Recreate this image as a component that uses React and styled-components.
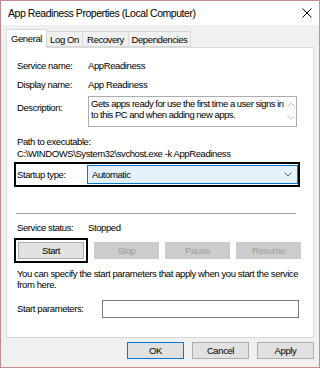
import React from 'react';
import styled, { createGlobalStyle } from 'styled-components';

const GlobalStyle = createGlobalStyle`
  html, body { margin: 0; padding: 0; background: #ffffff; }
  body { font-family: "Liberation Sans", Arial, sans-serif; }
`;

const Window = styled.div`
  width: 320px;
  height: 368px;
  box-sizing: border-box;
  border: 1px solid #c98b8c;
  background: #f0f0f0;
  display: flex;
  flex-direction: column;
  color: #000;
  font-size: 9.5px;
  letter-spacing: -0.4px;
`;

const TitleBar = styled.div`
  height: 24px;
  background: #ffffff;
  display: flex;
  align-items: center;
  justify-content: space-between;
  padding: 0 7px 0 7px;
`;

const Title = styled.span`
  font-size: 10.5px;
  letter-spacing: -0.45px;
  color: #000;
`;

const Body = styled.div`
  padding: 4px 5px 0 5px;
  display: flex;
  flex-direction: column;
`;

const TabRow = styled.div`
  display: flex;
  align-items: flex-end;
  height: 18px;
`;

const Tab = styled.div`
  box-sizing: border-box;
  width: ${p => p.$w}px;
  height: ${p => (p.$active ? '19px' : '16px')};
  display: flex;
  align-items: center;
  justify-content: center;
  border: 1px solid #d9d9d9;
  border-bottom: ${p => (p.$active ? 'none' : '1px solid #d9d9d9')};
  border-left: ${p => (p.$first || p.$active ? '1px solid #d9d9d9' : 'none')};
  background: ${p => (p.$active ? '#ffffff' : '#f0f0f0')};
  margin-bottom: ${p => (p.$active ? '-1px' : '0')};
  position: relative;
  z-index: ${p => (p.$active ? 1 : 0)};
  padding-bottom: ${p => (p.$active ? '2px' : '0')};
`;

const Panel = styled.div`
  box-sizing: border-box;
  height: 291px;
  background: #ffffff;
  border: 1px solid #d9d9d9;
  padding: 11px 10px 0 10px;
  display: flex;
  flex-direction: column;
`;

const Row = styled.div`
  display: flex;
  align-items: ${p => (p.$top ? 'flex-start' : 'center')};
  margin-top: ${p => p.$mt || 0}px;
  line-height: ${p => p.$lh || 14}px;
`;

const Label = styled.div`
  width: ${p => p.$w || 71}px;
  flex: none;
  padding-top: ${p => p.$pt || 0}px;
`;

const Line = styled.div`
  margin-top: ${p => p.$mt || 0}px;
  line-height: ${p => p.$lh || 12}px;
  white-space: nowrap;
`;

const DescBox = styled.div`
  box-sizing: border-box;
  width: 209px;
  height: 31px;
  border: 1px solid #abadb3;
  display: flex;
  padding: 1px 0 0 2px;
  line-height: 11px;
`;

const DescText = styled.div`
  flex: 1;
  letter-spacing: -0.5px;
`;

const ScrollCol = styled.div`
  width: 10px;
  display: flex;
  flex-direction: column;
  align-items: center;
  justify-content: space-between;
  padding: 4px 0 6px 0;
`;

const Outline = styled.div`
  box-sizing: border-box;
  border: 2px solid #000;
  margin-left: -3px;
`;

const StartupOutline = styled(Outline)`
  width: 286px;
  margin-top: 2px;
  padding: 1px 0 1px 1px;
  display: flex;
  align-items: center;
`;

const Combo = styled.div`
  box-sizing: border-box;
  flex: 1;
  height: 19px;
  background: #e5f1fb;
  border: 1px solid #0078d7;
  display: flex;
  align-items: center;
  justify-content: space-between;
  padding: 0 5px 0 4px;
`;

const Separator = styled.div`
  width: 280px;
  height: 1px;
  background: #a0a0a0;
  margin: 26px 0 0 -1px;
`;

const ButtonRow = styled.div`
  display: flex;
  align-items: center;
  margin-top: 3px;
  gap: 6px;
`;

const StartOutline = styled(Outline)`
  padding: 2px;
  width: 74px;
`;

const Button = styled.div`
  box-sizing: border-box;
  width: ${p => p.$w || 65}px;
  height: 17px;
  display: flex;
  align-items: center;
  justify-content: center;
  background: ${p => (p.$disabled ? '#cccccc' : '#e1e1e1')};
  border: 1px solid ${p => (p.$primary ? '#0078d7' : p.$disabled ? '#cccccc' : '#adadad')};
  color: ${p => (p.$disabled ? '#9d9d9d' : '#000')};
`;

const Input = styled.div`
  box-sizing: border-box;
  width: 197px;
  height: 18px;
  border: 1px solid #7a7a7a;
  background: #fff;
`;

const Footer = styled.div`
  display: flex;
  justify-content: flex-end;
  gap: 8px;
  margin-top: 4px;
`;

const Chevron = ({ up, color = '#606060' }) => (
  <svg width="8" height="5" viewBox="0 0 8 5">
    <path
      d={up ? 'M0.5 4.5 L4 1 L7.5 4.5' : 'M0.5 0.5 L4 4 L7.5 0.5'}
      fill="none"
      stroke={color}
      strokeWidth="1"
    />
  </svg>
);

const CloseIcon = () => (
  <svg width="10" height="10" viewBox="0 0 10 10">
    <path d="M0.5 0.5 L9.5 9.5 M9.5 0.5 L0.5 9.5" stroke="#000" strokeWidth="1" />
  </svg>
);

const App = () => (
  <>
    <GlobalStyle />
    <Window>
      <TitleBar>
        <Title>App Readiness Properties (Local Computer)</Title>
        <CloseIcon />
      </TitleBar>
      <Body>
        <TabRow>
          <Tab $active $first $w={41}>General</Tab>
          <Tab $w={36}>Log On</Tab>
          <Tab $w={46}>Recovery</Tab>
          <Tab $w={62}>Dependencies</Tab>
        </TabRow>
        <Panel>
          <Row>
            <Label>Service name:</Label>
            <span>AppReadiness</span>
          </Row>
          <Row $mt={5}>
            <Label>Display name:</Label>
            <span>App Readiness</span>
          </Row>
          <Row $mt={4} $top>
            <Label $pt={5}>Description:</Label>
            <DescBox>
              <DescText>
                Gets apps ready for use the first time a user signs in to this PC and when adding new apps.
              </DescText>
              <ScrollCol>
                <Chevron up color="#c4c4c4" />
                <Chevron color="#c4c4c4" />
              </ScrollCol>
            </DescBox>
          </Row>
          <Line $mt={9}>Path to executable:</Line>
          <Line>C:\WINDOWS\System32\svchost.exe -k AppReadiness</Line>
          <StartupOutline>
            <Label $w={70}>Startup type:</Label>
            <Combo>
              <span>Automatic</span>
              <Chevron />
            </Combo>
          </StartupOutline>
          <Separator />
          <Row $mt={7}>
            <Label>Service status:</Label>
            <span>Stopped</span>
          </Row>
          <ButtonRow>
            <StartOutline>
              <Button $w={66}>Start</Button>
            </StartOutline>
            <Button $disabled>Stop</Button>
            <Button $disabled>Pause</Button>
            <Button $disabled>Resume</Button>
          </ButtonRow>
          <Line $mt={5} $lh={11}>You can specify the start parameters that apply when you start the service</Line>
          <Line $lh={11}>from here.</Line>
          <Row $mt={10}>
            <Label $w={85}>Start parameters:</Label>
            <Input />
          </Row>
        </Panel>
        <Footer>
          <Button $w={57} $primary>OK</Button>
          <Button $w={57}>Cancel</Button>
          <Button $w={57}>Apply</Button>
        </Footer>
      </Body>
    </Window>
  </>
);

export default App;
